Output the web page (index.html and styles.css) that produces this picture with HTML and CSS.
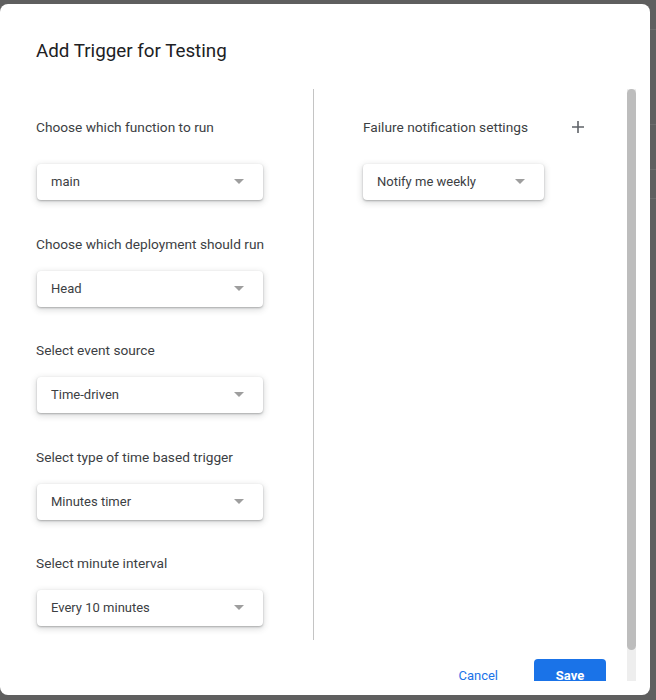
FILE: index.html
```html
<!DOCTYPE html>
<html>
<head>
<meta charset="utf-8">
<link rel="stylesheet" href="styles.css">
</head>
<body>
<div class="screen">
  <div class="dialog">
    <div class="header">Add Trigger for Testing</div>
    <div class="scroll-wrap">
      <div class="scroller">
        <div class="columns">
          <div class="col-left">
            <div class="label first">Choose which function to run</div>
            <div class="select wide"><span>main</span><i class="arrow"></i></div>
            <div class="label">Choose which deployment should run</div>
            <div class="select wide"><span>Head</span><i class="arrow"></i></div>
            <div class="label">Select event source</div>
            <div class="select wide"><span>Time-driven</span><i class="arrow"></i></div>
            <div class="label">Select type of time based trigger</div>
            <div class="select wide"><span>Minutes timer</span><i class="arrow"></i></div>
            <div class="label">Select minute interval</div>
            <div class="select wide last"><span>Every 10 minutes</span><i class="arrow"></i></div>
          </div>
          <div class="divider"></div>
          <div class="col-right">
            <div class="label-row">
              <div class="label">Failure notification settings</div>
              <svg class="plus" width="14" height="14" viewBox="0 0 14 14"><path d="M7 1v12M1 7h12" stroke="#5f6368" stroke-width="1.6" fill="none"/></svg>
            </div>
            <div class="select narrow"><span>Notify me weekly</span><i class="arrow"></i></div>
          </div>
        </div>
        <div class="footer">
          <button class="btn-text">Cancel</button>
          <button class="btn-primary">Save</button>
        </div>
      </div>
      <div class="scrollbar"><div class="thumb"></div></div>
    </div>
  </div>
  <div class="backdrop">
    <div class="bline l1"></div>
    <div class="bline l2"></div>
    <div class="bline l3"></div>
    <div class="bline l4"></div>
  </div>
</div>
</body>
</html>
```
FILE: styles.css
```css
html, body {
  margin: 0;
  padding: 0;
  background: #5f5f5f;
  font-family: Roboto, "Liberation Sans", Arial, sans-serif;
}
.screen {
  display: flex;
  width: 656px;
  height: 700px;
}
.dialog {
  margin-top: 4px;
  width: 650px;
  height: 691px;
  background: #fff;
  border-radius: 8px;
  display: flex;
  flex-direction: column;
  box-sizing: border-box;
  padding-right: 14px;
  overflow: hidden;
}
.header {
  height: 85px;
  flex: none;
  box-sizing: border-box;
  padding: 35px 0 0 36px;
  font-size: 18.8px;
  line-height: 24px;
  color: #202124;
}
.scroll-wrap {
  display: flex;
  height: 592px;
  flex: none;
}
.scroller {
  flex: 1;
  overflow: hidden;
}
.scrollbar {
  width: 9px;
  flex: none;
  background: #eeeeee;
}
.thumb {
  height: 561px;
  background: #bdbdbd;
  border-radius: 5px;
}
.columns {
  display: flex;
  height: 551px;
}
.col-left {
  width: 313px;
  box-sizing: border-box;
  padding: 28px 0 0 36px;
}
.divider {
  width: 1px;
  background: #c4c4c4;
}
.col-right {
  flex: 1;
  padding: 28px 0 0 49px;
}
.label {
  font-size: 13.7px;
  line-height: 20px;
  color: #3c4043;
  margin-bottom: 17px;
}
.label.first { margin-bottom: 27px; }
.label-row {
  display: flex;
  align-items: center;
  width: 222px;
  justify-content: space-between;
  margin-bottom: 27px;
}
.label-row .label { margin-bottom: 0; }
.plus { display: block; }
.select {
  height: 36px;
  box-sizing: border-box;
  border-radius: 4px;
  background: #fff;
  box-shadow: 0 1px 2px rgba(60,64,67,.35), 0 2px 6px 1px rgba(60,64,67,.18);
  display: flex;
  align-items: center;
  justify-content: space-between;
  padding: 0 19px 1px 14px;
  font-size: 13px;
  color: #3c4043;
  margin-bottom: 33.5px;
}
.select.wide { width: 226px; margin-left: 1px; }
.select.narrow { width: 181px; }
.select.last { margin-bottom: 0; }
.arrow {
  width: 0;
  height: 0;
  border-left: 5px solid transparent;
  border-right: 5px solid transparent;
  border-top: 5px solid #9e9e9e;
}
.footer {
  display: flex;
  justify-content: flex-end;
  align-items: center;
  gap: 20px;
  padding: 19px 21px 22px 0;
}
.btn-text, .btn-primary {
  font-family: Roboto, "Liberation Sans", Arial, sans-serif;
  font-size: 13px;
  border: none;
  height: 32px;
  border-radius: 4px;
  cursor: pointer;
}
.btn-text {
  background: transparent;
  color: #1a73e8;
  padding: 0 16px;
}
.btn-primary {
  background: #1a73e8;
  color: #fff;
  font-weight: 700;
  width: 72px;
  padding: 0;
}
.backdrop {
  flex: 1;
  position: relative;
}
.bline {
  position: absolute;
  left: 0;
  right: 0;
  height: 1px;
  background: #6c6c6c;
}
.l1 { top: 29px; }
.l2 { top: 124px; }
.l3 { top: 169px; }
.l4 { top: 198px; }
```
